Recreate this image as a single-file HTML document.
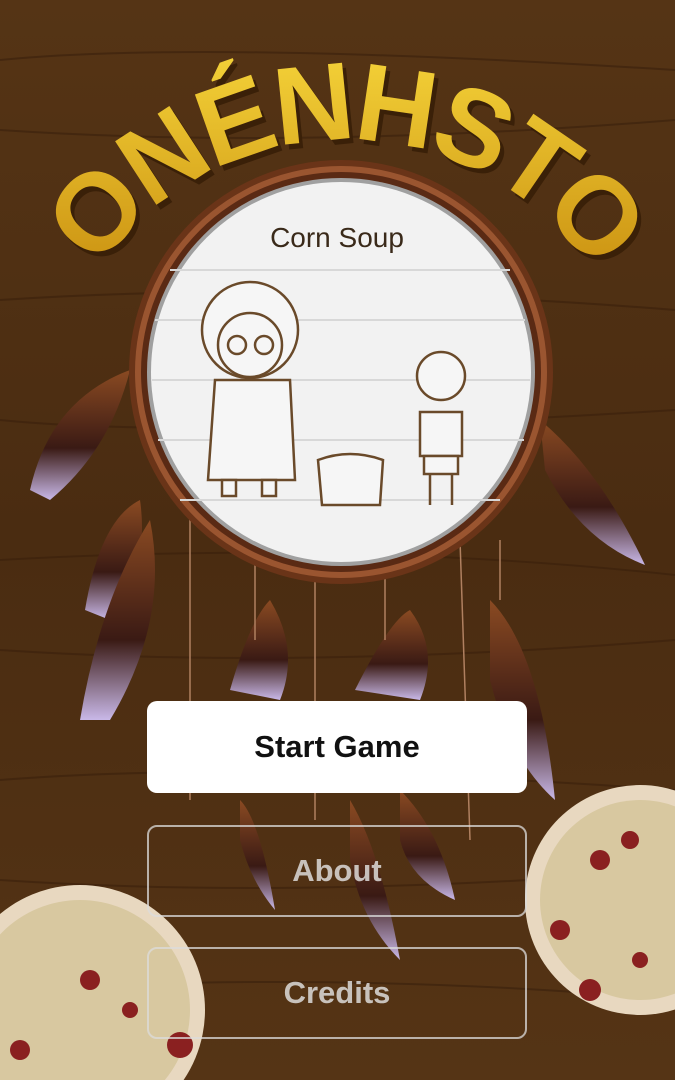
<!DOCTYPE html>
<html><head><meta charset="utf-8"><style>
html,body{margin:0;padding:0;width:675px;height:1080px;overflow:hidden}
body{position:relative;background:#4a2c12;font-family:"Liberation Sans",sans-serif}
svg{display:block}
.btn{position:absolute;left:147px;width:380px;height:92px;border-radius:10px;box-sizing:border-box;display:flex;align-items:center;justify-content:center;font-size:31px;font-weight:bold}
</style></head><body>
<svg width="675" height="1080" style="position:absolute;left:0;top:0">
<defs>
<linearGradient id="wood" x1="0" y1="0" x2="0" y2="1">
<stop offset="0" stop-color="#553415"/><stop offset="0.5" stop-color="#4a2c11"/><stop offset="1" stop-color="#553415"/>
</linearGradient>
<linearGradient id="gold" x1="0" y1="0" x2="0" y2="1">
<stop offset="0" stop-color="#f6d53a"/><stop offset="1" stop-color="#c98f10"/>
</linearGradient>
<path id="arc" d="M 45 440 A 300 300 0 0 1 645 440"/>
<linearGradient id="fe" x1="0" y1="0" x2="0" y2="1">
<stop offset="0" stop-color="#8a4a22"/><stop offset="0.6" stop-color="#3a1a14"/><stop offset="1" stop-color="#c9b8e8"/>
</linearGradient>
</defs>
<rect width="675" height="1080" fill="url(#wood)"/>
<g stroke="#3a200c" stroke-width="2" fill="none" opacity="0.6">
<path d="M0 60 Q200 40 675 70"/><path d="M0 130 Q300 150 675 120"/><path d="M0 300 Q300 280 675 310"/>
<path d="M0 420 Q200 440 675 410"/><path d="M0 560 Q350 540 675 575"/><path d="M0 650 Q300 670 675 640"/>
<path d="M0 780 Q250 760 675 790"/><path d="M0 880 Q300 900 675 870"/><path d="M0 990 Q350 970 675 1000"/>
</g>
<g fill="url(#fe)">
<path d="M30 490 Q50 400 130 370 Q110 450 50 500 Z"/>
<path d="M85 610 Q100 520 140 500 Q150 570 110 620 Z"/>
<path d="M80 720 Q100 600 150 520 Q170 620 110 720 Z"/>
<path d="M540 420 Q600 470 645 565 Q580 540 545 470 Z"/>
<path d="M490 600 Q540 650 555 800 Q510 760 490 680 Z"/>
<path d="M230 690 Q250 620 270 600 Q300 650 280 700 Z"/>
<path d="M355 690 Q390 620 410 610 Q440 650 420 700 Z"/>
<path d="M240 800 Q260 820 275 910 Q250 880 240 840 Z"/>
<path d="M350 800 Q380 850 400 960 Q360 920 350 860 Z"/>
<path d="M400 790 Q440 830 455 900 Q410 880 400 840 Z"/>
</g>
<g stroke="#b08060" stroke-width="1.5">
<line x1="190" y1="500" x2="190" y2="800"/><line x1="255" y1="560" x2="255" y2="640"/>
<line x1="315" y1="570" x2="315" y2="820"/><line x1="385" y1="570" x2="385" y2="640"/>
<line x1="460" y1="540" x2="470" y2="840"/><line x1="500" y1="540" x2="500" y2="600"/>
</g>
<circle cx="341" cy="372" r="212" fill="#6a3418"/>
<circle cx="341" cy="372" r="206" fill="#9a5530"/>
<circle cx="341" cy="372" r="200" fill="#5a2a14"/>
<circle cx="341" cy="372" r="194" fill="#a0a0a0"/>
<circle cx="341" cy="372" r="190" fill="#f2f2f2"/>
<g stroke="#d8d8d8" stroke-width="2">
<line x1="170" y1="270" x2="510" y2="270"/><line x1="155" y1="320" x2="525" y2="320"/>
<line x1="152" y1="380" x2="530" y2="380"/><line x1="158" y1="440" x2="524" y2="440"/>
<line x1="180" y1="500" x2="500" y2="500"/>
</g>
<text x="337" y="247" text-anchor="middle" font-size="28" fill="#3a2a1a">Corn Soup</text>
<g stroke="#6a4a2a" stroke-width="2.5" fill="#f6f6f6">
<circle cx="250" cy="330" r="48"/>
<circle cx="250" cy="345" r="32"/>
<circle cx="237" cy="345" r="9"/><circle cx="264" cy="345" r="9"/>
<path d="M215 380 L290 380 L295 480 L208 480 Z"/>
<rect x="222" y="480" width="14" height="16"/><rect x="262" y="480" width="14" height="16"/>
<path d="M318 460 Q350 448 383 460 L380 505 L322 505 Z"/>
<circle cx="441" cy="376" r="24"/>
<rect x="420" y="412" width="42" height="44"/>
<rect x="424" y="456" width="34" height="18"/>
<line x1="430" y1="474" x2="430" y2="505"/><line x1="452" y1="474" x2="452" y2="505"/>
</g>
<text font-size="110" font-weight="bold" fill="#3a2008" letter-spacing="-5" transform="translate(4,5)"><textPath href="#arc" startOffset="50%" text-anchor="middle">ONÉNHSTO</textPath></text>
<text font-size="110" font-weight="bold" fill="url(#gold)" letter-spacing="-5"><textPath href="#arc" startOffset="50%" text-anchor="middle">ONÉNHSTO</textPath></text>
<circle cx="640" cy="900" r="115" fill="#e8d8c0"/>
<circle cx="640" cy="900" r="100" fill="#d8c8a0"/>
<g fill="#8a2020"><circle cx="600" cy="860" r="10"/><circle cx="630" cy="840" r="9"/><circle cx="560" cy="930" r="10"/><circle cx="590" cy="990" r="11"/><circle cx="640" cy="960" r="8"/></g>
<circle cx="80" cy="1010" r="125" fill="#e8d8c0"/>
<circle cx="80" cy="1010" r="110" fill="#d8c8a0"/>
<g fill="#8a2020"><circle cx="90" cy="980" r="10"/><circle cx="180" cy="1045" r="13"/><circle cx="20" cy="1050" r="10"/><circle cx="130" cy="1010" r="8"/></g>
</svg>
<div class="btn" style="top:701px;background:#fff;color:#111">Start Game</div>
<div class="btn" style="top:825px;border:2px solid rgba(220,220,220,.75);color:rgba(230,230,230,.8)">About</div>
<div class="btn" style="top:947px;border:2px solid rgba(220,220,220,.75);color:rgba(230,230,230,.8)">Credits</div>
</body></html>
